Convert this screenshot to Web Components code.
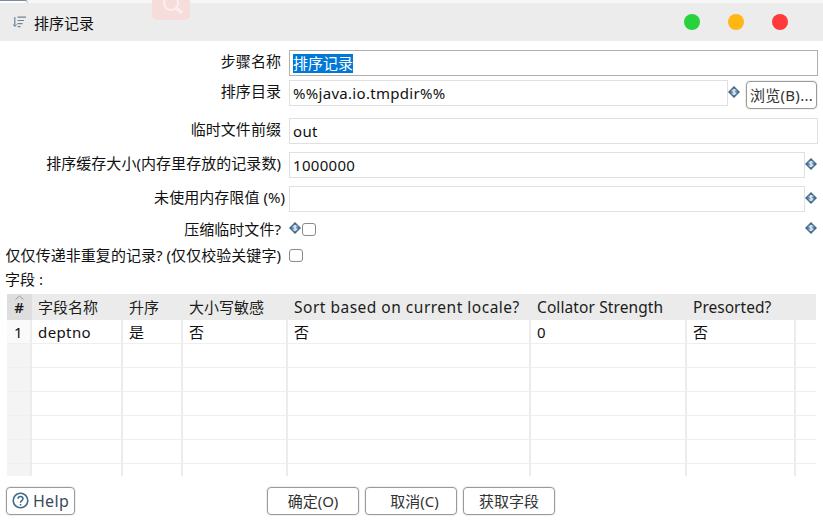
<!DOCTYPE html>
<html>
<head>
<meta charset="utf-8">
<style>
  html, body { margin: 0; padding: 0; background: #fff; }
  body {
    width: 823px;
    height: 521px;
    overflow: hidden;
    font-family: "Noto Sans", "Noto Sans CJK SC", sans-serif;
    font-size: 15px;
    color: #111;
  }
</style>
</head>
<body>
<sort-dialog>
  <title-bar slot="title">排序记录</title-bar>
  <form-row slot="form" label="步骤名称" top="9"><text-field selected value="排序记录" strong></text-field></form-row>
  <form-row slot="form" label="排序目录" top="4">
    <text-field value="%%java.io.tmpdir%%" style="flex:none;width:439px"></text-field>
    <var-icon></var-icon>
    <dlg-button small style="margin-left:5px;align-self:flex-end;margin-bottom:-3px">浏览(B)...</dlg-button>
  </form-row>
  <form-row slot="form" label="临时文件前缀" top="12"><text-field value="out"></text-field></form-row>
  <form-row slot="form" label="排序缓存大小(内存里存放的记录数)" top="8"><text-field value="1000000"></text-field><var-icon></var-icon></form-row>
  <form-row slot="form" label="未使用内存限值 (%)" top="8" overhang="4"><text-field value=""></text-field><var-icon></var-icon></form-row>
  <form-row slot="form" label="压缩临时文件?" top="8" height="18">
    <var-icon></var-icon><check-box></check-box><span style="flex:1"></span><var-icon></var-icon>
  </form-row>
  <form-row slot="form" label="仅仅传递非重复的记录? (仅仅校验关键字)" top="8" height="18"><check-box></check-box></form-row>
  <field-table slot="table"></field-table>
  <dlg-button slot="help" help style="width:69px">Help</dlg-button>
  <dlg-button slot="actions" style="width:92px">确定(O)</dlg-button>
  <dlg-button slot="actions" style="width:92px;padding-left:7px">取消(C)</dlg-button>
  <dlg-button slot="actions" style="width:92px">获取字段</dlg-button>
</sort-dialog>

<script>
  class SortDialog extends HTMLElement {
    constructor() {
      super();
      const shadow = this.attachShadow({ mode: "open" });
      shadow.innerHTML = `
        <style>
          :host { display: block; position: relative; width: 823px; height: 521px; }
          .top { height: 3px; background: #f6f6f6; }
          .ghost {
            position: absolute; left: 152px; top: 0; width: 38px; height: 20px;
            background: #f7dcdc; border-radius: 0 0 5px 5px; z-index: 2;
          }
          .ghost svg { display: block; }
          .tab {
            position: absolute; left: 0; top: 0; width: 27px; height: 2px;
            border-top: 1px solid #7d8c9a; border-right: 1px solid #c4ccd3;
            border-top-right-radius: 3px; background: #fff;
          }
          .form { display: flex; flex-direction: column; }
          .fields-label { padding: 6px 0 0 5px; height: 18px; line-height: 18px; }
          .table { padding: 6px 7px 0 7px; }
          .footer { display: flex; padding: 11px 0 0 6px; }
          .actions { display: flex; gap: 6px; margin-left: 192px; }
        </style>
        <div class="top"></div>
        <div class="tab"></div>
        <div class="ghost">
          <svg width="38" height="20" viewBox="0 0 38 20" fill="none" stroke="#fbeeee" stroke-width="2">
            <circle cx="19" cy="3" r="7"></circle><path d="M24 8l6 5" stroke-width="3"></path>
          </svg>
        </div>
        <slot name="title"></slot>
        <div class="form"><slot name="form"></slot></div>
        <div class="fields-label">字段 :</div>
        <div class="table"><slot name="table"></slot></div>
        <div class="footer">
          <slot name="help"></slot>
          <div class="actions"><slot name="actions"></slot></div>
        </div>
      `;
    }
  }

  class TitleBar extends HTMLElement {
    constructor() {
      super();
      const shadow = this.attachShadow({ mode: "open" });
      shadow.innerHTML = `
        <style>
          :host {
            display: flex; align-items: center; height: 38px;
            background: #ececec; padding-left: 13px; box-sizing: border-box;
          }
          svg { flex: none; margin-right: 8px; }
          .name { flex: 1; color: #111; }
          .lights { display: flex; gap: 28px; padding-right: 35px; }
          .lights i { display: block; width: 16px; height: 16px; border-radius: 50%; }
        </style>
        <svg width="13" height="12" viewBox="0 0 13 12" fill="none" stroke="#6f8496" stroke-width="1.2">
          <path d="M1.8 1v9"></path>
          <path d="M0 8.3L1.8 10.6 3.6 8.3" stroke-width="1"></path>
          <path d="M4.5 1.2h8.5M4.5 4.5h6.5M4.5 7.6h5M4.5 10.6h3"></path>
        </svg>
        <span class="name"><slot></slot></span>
        <div class="lights">
          <i style="background:#28d23c"></i>
          <i style="background:#ffb713"></i>
          <i style="background:#ff3a3a"></i>
        </div>
      `;
    }
  }

  class FormRow extends HTMLElement {
    constructor() {
      super();
      const shadow = this.attachShadow({ mode: "open" });
      const height = this.getAttribute("height") || 26;
      const top = this.getAttribute("top") || 0;
      const overhang = this.getAttribute("overhang") || 0;
      shadow.innerHTML = `
        <style>
          :host {
            display: grid; grid-template-columns: 281px 1fr; column-gap: 8px;
            height: ${height}px; margin-top: ${top}px; padding-right: 5px;
          }
          .label {
            justify-self: end; white-space: nowrap; align-self: center;
            ${height == 26 ? "padding-bottom: 4px;" : ""}
            line-height: 18px; margin-right: -${overhang}px; letter-spacing: .05px;
          }
          .body { display: flex; align-items: center; min-width: 0; }
        </style>
        <div class="label">${this.getAttribute("label")}</div>
        <div class="body"><slot></slot></div>
      `;
    }
  }

  class TextField extends HTMLElement {
    constructor() {
      super();
      const shadow = this.attachShadow({ mode: "open" });
      const value = this.getAttribute("value");
      const text = this.hasAttribute("selected")
        ? `<span class="sel">${value}</span>`
        : value;
      shadow.innerHTML = `
        <style>
          :host {
            display: block; flex: 1; height: 26px; box-sizing: border-box;
            border: 1px solid #e0e0e0; background: #fff; color: #111;
            padding-left: 3px; line-height: 25px; letter-spacing: .3px;
            white-space: nowrap; overflow: hidden;
          }
          :host([strong]) { border-color: #b0b0b0; }
          .sel { background: #0078d7; color: #fff; display: inline-block; line-height: 19px; letter-spacing: 0; }
        </style>
        ${text}
      `;
    }
  }

  class VarIcon extends HTMLElement {
    constructor() {
      super();
      const shadow = this.attachShadow({ mode: "open" });
      shadow.innerHTML = `
        <style>
          :host { display: block; flex: none; width: 13px; height: 12px; margin-bottom: 2px; }
          svg { display: block; }
        </style>
        <svg width="12" height="12" viewBox="0 0 13 13">
          <path d="M6.5 0L13 6.5 6.5 13 0 6.5z" fill="#3f6a8e"></path>
          <circle cx="6.5" cy="6.5" r="3.7" fill="#6d8dab"></circle>
          <path d="M8.4 4.7C7.6 3.9 4.9 3.9 4.9 5.3c0 1.5 3.4.9 3.4 2.4 0 1.4-2.7 1.4-3.6.6M6.5 3.2v6.6" fill="none" stroke="#fff" stroke-width="1"></path>
        </svg>
      `;
    }
  }

  class CheckBox extends HTMLElement {
    constructor() {
      super();
      const shadow = this.attachShadow({ mode: "open" });
      shadow.innerHTML = `
        <style>
          :host {
            display: block; flex: none; width: 14px; height: 13px; box-sizing: border-box;
            border: 1px solid #8a8a8a; border-radius: 3px; background: #fff;
          }
        </style>
      `;
    }
  }

  class DlgButton extends HTMLElement {
    constructor() {
      super();
      const shadow = this.attachShadow({ mode: "open" });
      const icon = this.hasAttribute("help")
        ? `<svg width="17" height="17" viewBox="0 0 17 17" fill="none" stroke="#3f6a8e">
             <circle cx="8.5" cy="8.5" r="7.3" stroke-width="1.6"></circle>
             <path d="M6 6.8c0-3.2 5-3.2 5 0 0 1.9-2.5 1.9-2.5 3.9M8.5 12v1.6" stroke-width="1.5"></path>
           </svg>`
        : "";
      shadow.innerHTML = `
        <style>
          :host {
            display: flex; flex: none; align-items: center; justify-content: center; gap: 4px;
            height: 28px; box-sizing: border-box; white-space: nowrap; padding-bottom: 1px;
            border: 1px solid #9a9a9a; border-radius: 4px; background: #fff;
            box-shadow: 0 0 0 1px #f0f0f0; color: #333;
          }
          :host([small]) { width: 71px; letter-spacing: .3px; }
          :host([help]) { color: #3a4a58; font-size: 16px; letter-spacing: .3px; }
        </style>
        ${icon}<slot></slot>
      `;
    }
  }

  const COLUMNS = [
    { title: "#", width: 25 },
    { title: "字段名称", width: 91 },
    { title: "升序", width: 60 },
    { title: "大小写敏感", width: 105 },
    { title: "Sort based on current locale?", width: 243, latin: 0.5 },
    { title: "Collator Strength", width: 156, latin: 0.1 },
    { title: "Presorted?", width: 109, latin: 0.02 },
    { title: "", width: 20 },
  ];
  const ROWS = [["1", "deptno", "是", "否", "否", "0", "否", ""]];

  class FieldTable extends HTMLElement {
    constructor() {
      super();
      const shadow = this.attachShadow({ mode: "open" });
      const cells = [];

      COLUMNS.forEach((col, i) => {
        const cls = i === 0 ? "head num" : "head";
        const latin = col.latin !== undefined
          ? `font-size:15.5px;letter-spacing:${col.latin}px`
          : "";
        cells.push(`<div class="${cls}" style="${latin}">${col.title}</div>`);
      });
      for (let r = 0; r < 7; r++) {
        COLUMNS.forEach((col, i) => {
          const text = ROWS[r] ? ROWS[r][i] : "";
          let cls = "cell";
          if (i === 0) cls += " index";
          if (i === 0 && ROWS[r]) cls += " filled";
          if (i === COLUMNS.length - 1) cls += " last";
          cells.push(`<div class="${cls}">${text}</div>`);
        });
      }

      shadow.innerHTML = `
        <style>
          :host {
            display: grid; width: 809px; height: 182px; overflow: hidden;
            grid-template-columns: ${COLUMNS.map((c) => c.width + "px").join(" ")};
            grid-auto-rows: 24px; grid-template-rows: 26px;
            position: relative;
          }
          .head {
            background: #ebebeb; padding-left: 6px; line-height: 27px; white-space: nowrap;
            color: #1c1c1c;
          }
          .num { background: #dedede; padding: 0 1px 0 0; text-align: center; font-weight: 600; }
          .cell {
            box-sizing: border-box; border-right: 2px solid #ececec; border-bottom: 1px solid #efefef;
            padding-left: 6px; line-height: 24px; white-space: nowrap; color: #111; letter-spacing: .4px;
          }
          .index { background: #f4f4f4; padding-left: 0; text-align: center; }
          .filled { background: #fafafa; }
          .last { border-right: none; }
          .caret { position: absolute; left: 8px; top: 1px; }
        </style>
        ${cells.join("")}
        <svg class="caret" width="9" height="5" viewBox="0 0 9 5" fill="none" stroke="#9a9a9a"><path d="M.5 4.5L4.5 1l4 3.5"></path></svg>
      `;
    }
  }

  customElements.define("title-bar", TitleBar);
  customElements.define("form-row", FormRow);
  customElements.define("text-field", TextField);
  customElements.define("var-icon", VarIcon);
  customElements.define("check-box", CheckBox);
  customElements.define("dlg-button", DlgButton);
  customElements.define("field-table", FieldTable);
  customElements.define("sort-dialog", SortDialog);
</script>
</body>
</html>
